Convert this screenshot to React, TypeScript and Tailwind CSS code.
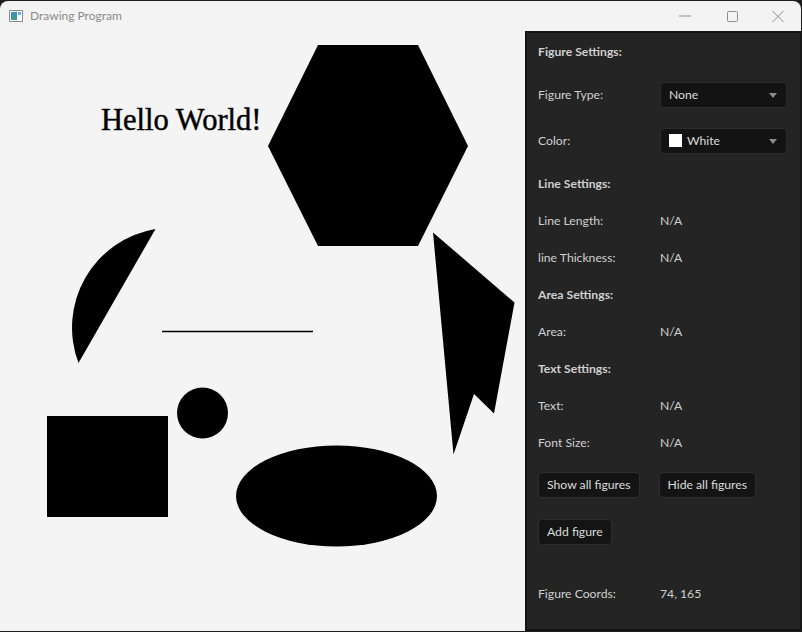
import React from "react";

const panelFont = { fontFamily: "Lato, 'Noto Sans', sans-serif" };

const ComboBox = ({ children }: { children: React.ReactNode }) => (
  <div className="flex h-[26px] w-[127px] items-center justify-between rounded-[4px] border border-[#2c2c2c] bg-[#131313] pl-2 pr-[9px] text-[#dcdcdc]">
    <div className="flex items-center gap-[5px]">{children}</div>
    <svg width="8" height="5" viewBox="0 0 8 5">
      <path d="M0 0 L8 0 L4 5 Z" fill="#8c8c8c" />
    </svg>
  </div>
);

const PanelButton = ({ label }: { label: string }) => (
  <button className="h-[26px] rounded-[4px] border border-[#2e2e2e] bg-[#141414] px-2 text-[#dcdcdc]">
    {label}
  </button>
);

const Row = ({
  label,
  bold,
  className,
  children,
}: {
  label?: string;
  bold?: boolean;
  className?: string;
  children?: React.ReactNode;
}) => (
  <div className={`flex h-[26px] items-center ${className ?? ""}`}>
    {label && (
      <span className={`w-[122px] shrink-0 ${bold ? "font-bold" : ""}`}>{label}</span>
    )}
    {children}
  </div>
);

const TitleBar = () => (
  <div className="flex h-[30px] shrink-0 items-center bg-[#f3f3f3]">
    {/* app icon */}
    <svg className="ml-[9px]" width="14" height="12" viewBox="0 0 14 12">
      <defs>
        <linearGradient id="ic" x1="0" y1="0" x2="0" y2="1">
          <stop offset="0" stopColor="#3a8fd0" />
          <stop offset="1" stopColor="#3aa676" />
        </linearGradient>
      </defs>
      <rect x="0.5" y="0.5" width="13" height="11" fill="#ffffff" stroke="#8d8d8d" />
      <rect x="2" y="2" width="6" height="8" fill="url(#ic)" />
      <rect x="9" y="2" width="3" height="3" fill="#6db3e0" />
    </svg>
    <span
      className="ml-[7px] text-[12px] text-[#8b8b8b]"
      style={{ fontFamily: "Lato, 'Noto Sans', sans-serif" }}
    >
      Drawing Program
    </span>
    <div className="ml-auto flex items-center">
      <div className="flex h-[30px] w-[46px] items-center justify-center pr-[3px]">
        <svg width="12" height="2" viewBox="0 0 12 2">
          <line x1="0" y1="1" x2="12" y2="1" stroke="#8f8f8f" strokeWidth="1" />
        </svg>
      </div>
      <div className="flex h-[30px] w-[46px] items-center justify-center">
        <svg width="11" height="11" viewBox="0 0 11 11">
          <rect x="0.5" y="0.5" width="10" height="10" rx="1" fill="none" stroke="#8f8f8f" />
        </svg>
      </div>
      <div className="flex h-[30px] w-[46px] items-center justify-center">
        <svg width="12" height="11" viewBox="0 0 12 11">
          <path d="M0.5 0 L11.5 11 M11.5 0 L0.5 11" stroke="#8f8f8f" strokeWidth="1" />
        </svg>
      </div>
    </div>
  </div>
);

const Canvas = () => (
  <div className="w-[525px] shrink-0 bg-[#f4f4f4]">
    <svg width="525" height="599" viewBox="0 31 525 599">
      <text
        x="101"
        y="130"
        fontSize="30.5"
        fill="#000"
        stroke="#000"
        strokeWidth="0.45"
        style={{ fontFamily: "'Liberation Serif', 'Times New Roman', serif" }}
      >
        Hello World!
      </text>
      <polygon points="318,45 418,45 468,146 418,246 318,246 268,146" fill="#000" />
      <path d="M155.5 229 A100 100 0 0 0 78.5 363 Z" fill="#000" />
      <line x1="162" y1="331.5" x2="313" y2="331.5" stroke="#000" strokeWidth="1.3" />
      <polygon points="433,232.5 514.5,302.5 494,413.5 474,394 453.5,454.5" fill="#000" />
      <circle cx="202.5" cy="413" r="25.5" fill="#000" />
      <rect x="47" y="416" width="121" height="101" fill="#000" />
      <ellipse cx="336.5" cy="496" rx="100.5" ry="50.5" fill="#000" />
    </svg>
  </div>
);

const SettingsPanel = () => (
  <div
    className="flex flex-1 flex-col border-2 border-r-[1px] border-[#141414] bg-[#242424] pl-[11px] text-[12.2px] text-[#d0d0d0]"
    style={panelFont}
  >
    <Row label="Figure Settings:" bold className="mt-[6px]" />
    <Row label="Figure Type:" className="mt-[17px]">
      <ComboBox>
        <span>None</span>
      </ComboBox>
    </Row>
    <Row label="Color:" className="mt-[20px]">
      <ComboBox>
        <span className="h-[13px] w-[13px] bg-white" />
        <span>White</span>
      </ComboBox>
    </Row>
    <Row label="Line Settings:" bold className="mt-[17px]" />
    <Row label="Line Length:" className="mt-[11px]">
      <span>N/A</span>
    </Row>
    <Row label="line Thickness:" className="mt-[11px]">
      <span>N/A</span>
    </Row>
    <Row label="Area Settings:" bold className="mt-[11px]" />
    <Row label="Area:" className="mt-[11px]">
      <span>N/A</span>
    </Row>
    <Row label="Text Settings:" bold className="mt-[11px]" />
    <Row label="Text:" className="mt-[11px]">
      <span>N/A</span>
    </Row>
    <Row label="Font Size:" className="mt-[11px]">
      <span>N/A</span>
    </Row>
    <div className="mt-[16px] flex h-[26px] items-center gap-[19px]">
      <PanelButton label="Show all figures" />
      <PanelButton label="Hide all figures" />
    </div>
    <div className="mt-[21px] flex h-[26px] items-center">
      <PanelButton label="Add figure" />
    </div>
    <Row label="Figure Coords:" className="mt-[36px]">
      <span>74, 165</span>
    </Row>
  </div>
);

export default function App() {
  return (
    <div className="h-[632px] w-[802px] overflow-hidden bg-[#1d1d1d] pt-[1px]">
      <div className="flex h-[630px] w-[801px] flex-col overflow-hidden rounded-t-[8px]">
        <TitleBar />
        <div className="flex flex-1">
          <Canvas />
          <SettingsPanel />
        </div>
      </div>
    </div>
  );
}
